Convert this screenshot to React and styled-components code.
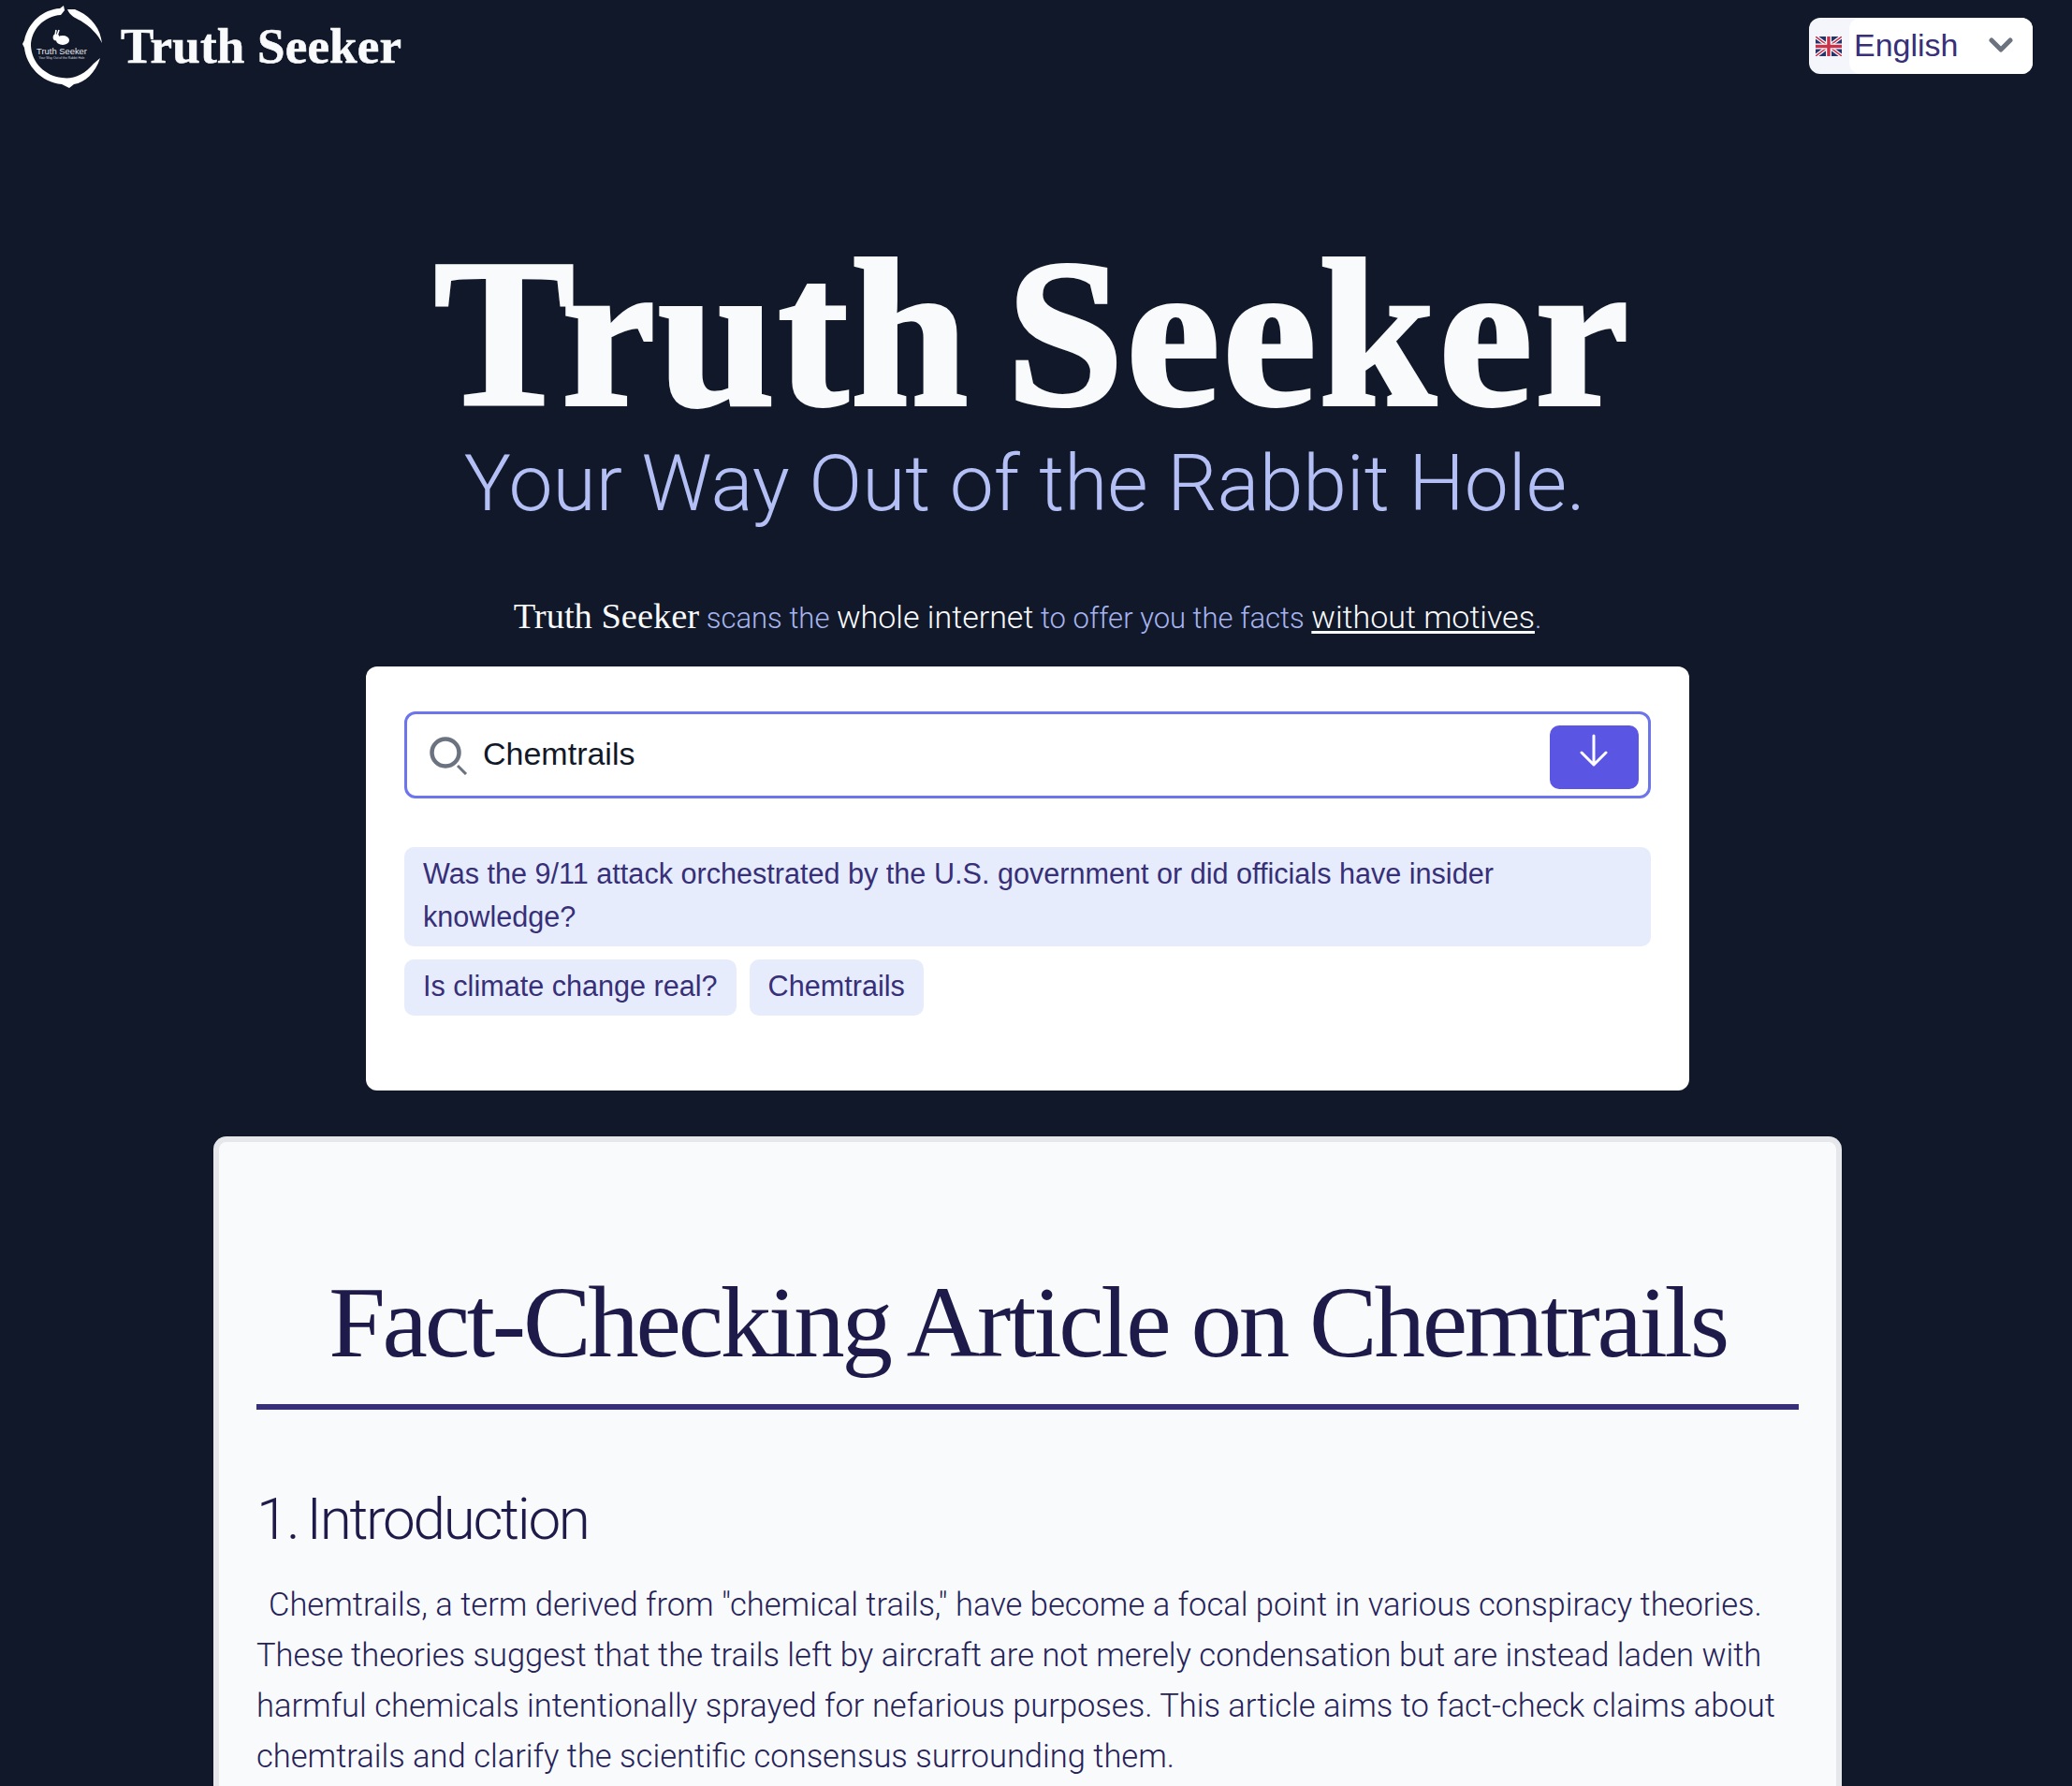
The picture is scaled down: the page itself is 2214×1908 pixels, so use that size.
import React from "react";
import styled, { createGlobalStyle } from "styled-components";

const GlobalStyle = createGlobalStyle`
  html, body {
    margin: 0;
    padding: 0;
    background: #111829;
  }
  * {
    box-sizing: border-box;
  }
`;

const SANS = `"Liberation Sans", Arial, sans-serif`;
const LIGHT = `Roboto, "Liberation Sans", Arial, sans-serif`;
const SERIF = `"Liberation Serif", "Times New Roman", serif`;

const Page = styled.div`
  width: 2214px;
  height: 1908px;
  overflow: hidden;
  display: flex;
  flex-direction: column;
  background: #111829;
  font-family: ${SANS};
`;

const NavBar = styled.header`
  flex: none;
  height: 98px;
  padding: 0 42px 0 22px;
  display: flex;
  align-items: center;
  justify-content: space-between;
`;

const Brand = styled.div`
  display: flex;
  align-items: center;
  gap: 19px;
`;

const BrandName = styled.span`
  font-family: ${SERIF};
  font-weight: 700;
  font-size: 53px;
  letter-spacing: 0.2px;
  -webkit-text-stroke: 0.6px #f9fafb;
  color: #f9fafb;
`;

const LangSelect = styled.div`
  width: 239px;
  height: 60px;
  background: #f4f6fb;
  border-radius: 12px;
  display: flex;
  align-items: center;
  padding-left: 7px;
  color: #372f78;
`;

const LangField = styled.div`
  flex: 1;
  height: 100%;
  margin-left: 8px;
  padding: 0 21px 2px 5px;
  background: #fff;
  border-radius: 12px;
  display: flex;
  align-items: center;
  justify-content: space-between;
  font-size: 34px;
`;

const Hero = styled.section`
  flex: none;
  display: flex;
  flex-direction: column;
  align-items: center;
  padding: 146px 18px 0 0;
`;

const HeroTitle = styled.h1`
  margin: 0 0 0 11px;
  font-family: ${SERIF};
  font-weight: 700;
  font-size: 225px;
  line-height: 225px;
  letter-spacing: 3px;
  word-spacing: -21px;
  -webkit-text-stroke: 4px #f9fafb;
  color: #f9fafb;
`;

const HeroSub = styled.p`
  margin: 0 6px 0 0;
  font-family: ${LIGHT};
  font-size: 84px;
  line-height: 96px;
  font-weight: 300;
  color: #b4c0f5;
`;

const Tagline = styled.p`
  margin: 73px 0 0;
  font-family: ${LIGHT};
  font-weight: 300;
  font-size: 31px;
  line-height: 40px;
  color: #a5b4f0;
`;

const TagStrong = styled.span`
  font-family: ${SERIF};
  font-weight: 400;
  font-size: 38.5px;
  color: #f9fafb;
`;

const TagLight = styled.span`
  font-size: 34px;
  color: #f9fafb;
`;

const TagLink = styled(TagLight)`
  text-decoration: underline;
  text-underline-offset: 3px;
`;

const SearchCard = styled.section`
  width: 1414px;
  height: 453px;
  margin-top: 31px;
  padding: 48px 41px 0;
  background: #fff;
  border-radius: 12px;
`;

const SearchBar = styled.div`
  height: 93px;
  border: 3px solid #6d75ec;
  border-radius: 12px;
  display: flex;
  align-items: center;
  padding: 0 10px 0 23px;
`;

const SearchText = styled.span`
  flex: 1;
  margin-left: 16px;
  padding-bottom: 2px;
  font-size: 34px;
  color: #111827;
`;

const SubmitButton = styled.button`
  width: 95px;
  height: 68px;
  margin-top: 5px;
  padding: 0 2px 14px 0;
  border: 0;
  border-radius: 10px;
  background: #5a55e2;
  display: flex;
  align-items: center;
  justify-content: center;
`;

const Chips = styled.div`
  margin-top: 52px;
  display: flex;
  flex-wrap: wrap;
  gap: 14px;
`;

const Chip = styled.span`
  background: #e6ecfc;
  color: #372f78;
  border-radius: 10px;
  padding: 5px 20px 9px;
  font-size: 30.6px;
  line-height: 46px;
`;

const Article = styled.article`
  flex: 1;
  width: 1740px;
  margin: 49px 0 0 228px;
  padding: 132px 40px 0;
  background: #f9fafb;
  border: 6px solid #e5e7eb;
  border-bottom: 0;
  border-radius: 14px 14px 0 0;
`;

const ArticleTitle = styled.h1`
  margin: 0;
  padding-bottom: 26px;
  border-bottom: 6px solid #372f78;
  text-align: center;
  font-family: ${SERIF};
  font-weight: 400;
  font-size: 109px;
  line-height: 122px;
  letter-spacing: -3.25px;
  color: #1e1b4b;
`;

const SectionTitle = styled.h2`
  margin: 81px 0 0;
  font-family: ${LIGHT};
  font-size: 62px;
  line-height: 72px;
  font-weight: 300;
  letter-spacing: -2.3px;
  word-spacing: -4px;
  color: #1e1b4b;
`;

const Body = styled.p`
  margin: 28px 0 0;
  font-family: ${LIGHT};
  font-weight: 300;
  font-size: 34.5px;
  line-height: 54px;
  color: #25225a;
  text-indent: 13px;
`;

const Logo = () => (
  <svg width="88" height="92" viewBox="0 0 88 92">
    {/* brush ring, two tapered strokes */}
    <path
      d="M46 3 L42 6 C24 7 8 21 4 40 L2 44 L4 48 C6 67 22 85 44 87 L52 91 L57 87 C69 85 80 75 85 59 L78 65 C68 77 56 82 44 80 C26 78 12 64 11 46 C11 29 25 14 43 13 L47 8 Z"
      fill="#fff"
    />
    <path
      d="M50 7 L58 7 C71 12 83 23 86 38 L87 43 C83 34 74 25 64 19 C58 16 53 14 50 7 Z"
      fill="#fff"
    />
    {/* rabbit */}
    <ellipse cx="45" cy="40" rx="7" ry="5" fill="#fff" />
    <circle cx="38" cy="37" r="3.4" fill="#fff" />
    <path d="M39 35 L41 29 M37 35 L38 29" stroke="#fff" strokeWidth="1.6" />
    <text x="44" y="55" textAnchor="middle" fontSize="9.4" fontFamily={SANS} fill="#e5e7eb">
      Truth Seeker
    </text>
    <text x="44" y="60" textAnchor="middle" fontSize="3.4" fontFamily={SANS} fill="#d1d5db">
      Your Way Out of the Rabbit Hole
    </text>
  </svg>
);

const UKFlag = () => (
  <svg width="28" height="21" viewBox="0 0 28 21">
    <rect width="28" height="21" fill="#25336f" />
    <path d="M0 0 L28 21 M28 0 L0 21" stroke="#fff" strokeWidth="4" />
    <path d="M0 0 L28 21 M28 0 L0 21" stroke="#c8324a" strokeWidth="1.5" />
    <path d="M14 0 V21 M0 10.5 H28" stroke="#fff" strokeWidth="6" />
    <path d="M14 0 V21 M0 10.5 H28" stroke="#c8324a" strokeWidth="3.5" />
  </svg>
);

const Chevron = () => (
  <svg width="26" height="16" viewBox="0 0 26 16" fill="none">
    <path
      d="M3 3 L13 13 L23 3"
      stroke="#6b7280"
      strokeWidth="5"
      strokeLinecap="round"
      strokeLinejoin="round"
    />
  </svg>
);

const SearchIcon = () => (
  <svg width="42" height="42" viewBox="0 0 42 42" fill="none">
    <circle cx="18" cy="18" r="14.5" stroke="#6b7280" strokeWidth="4.5" />
    <path d="M31 32 L40 41" stroke="#6b7280" strokeWidth="3" />
  </svg>
);

const ArrowDownIcon = () => (
  <svg width="30" height="36" viewBox="0 0 30 36" fill="none">
    <path
      d="M15 2 V33 M2 20 L15 33 L28 20"
      stroke="#fff"
      strokeWidth="3"
      strokeLinecap="round"
      strokeLinejoin="round"
    />
  </svg>
);

export default function App() {
  return (
    <Page>
      <GlobalStyle />
      <NavBar>
        <Brand>
          <Logo />
          <BrandName>Truth Seeker</BrandName>
        </Brand>
        <LangSelect>
          <UKFlag />
          <LangField>
            English
            <Chevron />
          </LangField>
        </LangSelect>
      </NavBar>
      <Hero>
        <HeroTitle>Truth Seeker</HeroTitle>
        <HeroSub>Your Way Out of the Rabbit Hole.</HeroSub>
        <Tagline>
          <TagStrong>Truth Seeker</TagStrong> scans the <TagLight>whole internet</TagLight> to offer
          you the facts <TagLink>without motives</TagLink>.
        </Tagline>
        <SearchCard>
          <SearchBar>
            <SearchIcon />
            <SearchText>Chemtrails</SearchText>
            <SubmitButton aria-label="Search">
              <ArrowDownIcon />
            </SubmitButton>
          </SearchBar>
          <Chips>
            <Chip>
              Was the 9/11 attack orchestrated by the U.S. government or did officials have insider
              knowledge?
            </Chip>
            <Chip>Is climate change real?</Chip>
            <Chip>Chemtrails</Chip>
          </Chips>
        </SearchCard>
      </Hero>
      <Article>
        <ArticleTitle>Fact-Checking Article on Chemtrails</ArticleTitle>
        <SectionTitle>1. Introduction</SectionTitle>
        <Body>
          Chemtrails, a term derived from "chemical trails," have become a focal point in various
          conspiracy theories. These theories suggest that the trails left by aircraft are not
          merely condensation but are instead laden with harmful chemicals intentionally sprayed for
          nefarious purposes. This article aims to fact-check claims about chemtrails and clarify the
          scientific consensus surrounding them.
        </Body>
      </Article>
    </Page>
  );
}
